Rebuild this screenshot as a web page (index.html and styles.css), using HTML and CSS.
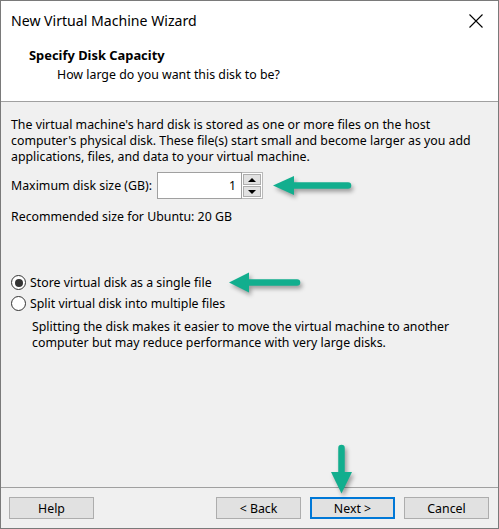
FILE: index.html
```html
<!DOCTYPE html>
<html lang="en">
<head>
    <meta charset="UTF-8">
    <title>New Virtual Machine Wizard</title>
    <link rel="stylesheet" href="styles.css">
</head>
<body>
    <div class="window">
        <div class="titlebar">
            <span class="title">New Virtual Machine Wizard</span>
            <svg class="close" width="14" height="14" viewBox="0 0 14 14">
                <path d="M0.5 0.5 L13.5 13.5 M13.5 0.5 L0.5 13.5" stroke="#000" stroke-width="1.1" fill="none"/>
            </svg>
        </div>

        <div class="header">
            <div class="step-title">Specify Disk Capacity</div>
            <div class="step-sub">How large do you want this disk to be?</div>
        </div>

        <main class="content">
            <p class="intro">The virtual machine's hard disk is stored as one or more files on the host computer's physical disk. These file(s) start small and become larger as you add applications, files, and data to your virtual machine.</p>

            <div class="size-row">
                <label for="disk-size">Maximum disk size (GB):</label>
                <div class="spin">
                    <input id="disk-size" type="text" value="1">
                    <div class="spin-buttons">
                        <span class="spin-btn"><span class="tri up"></span></span>
                        <span class="spin-btn"><span class="tri down"></span></span>
                    </div>
                </div>
            </div>

            <p class="recommended">Recommended size for Ubuntu: 20 GB</p>

            <div class="options">
                <div class="radio-row">
                    <span class="radio checked"></span>
                    <span>Store virtual disk as a single file</span>
                </div>
                <div class="radio-row">
                    <span class="radio"></span>
                    <span>Split virtual disk into multiple files</span>
                </div>
                <p class="note">Splitting the disk makes it easier to move the virtual machine to another computer but may reduce performance with very large disks.</p>
            </div>
        </main>

        <footer class="buttons">
            <button class="btn">Help</button>
            <span class="spacer"></span>
            <button class="btn">&lt; Back</button>
            <button class="btn focused">Next &gt;</button>
            <button class="btn">Cancel</button>
        </footer>

        <!-- green pointers -->
        <svg class="pointer pointer-size" width="90" height="32" viewBox="0 0 90 32">
            <path d="M4 14.5 L25 5 L25 24 Z" class="arrow-fill"/>
            <line x1="24" y1="14.5" x2="79" y2="14.5" class="arrow-line"/>
        </svg>
        <svg class="pointer pointer-single" width="90" height="32" viewBox="0 0 90 32">
            <path d="M4 11.5 L24 1.5 L24 21.5 Z" class="arrow-fill"/>
            <line x1="23" y1="11.5" x2="72" y2="11.5" class="arrow-line"/>
        </svg>
        <svg class="pointer pointer-next" width="32" height="56" viewBox="0 0 32 56">
            <path d="M12.5 49.5 L2 28 L23 28 Z" class="arrow-fill"/>
            <line x1="12.5" y1="4" x2="12.5" y2="29" class="arrow-line"/>
        </svg>
    </div>
</body>
</html>
```

FILE: styles.css
```css
/* Fenêtre de l'assistant */
body {
    margin: 0;
    font-family: "Noto Sans", "Open Sans", sans-serif;
    font-size: 12.35px;
    color: #000;
    background: #fff;
}

.window {
    position: relative;
    width: 499px;
    height: 529px;
    box-sizing: border-box;
    border: 1px solid #7a7a7a;
    display: flex;
    flex-direction: column;
    background: #f0f0f0;
    overflow: hidden;
}

/* Barre de titre */
.titlebar {
    height: 39px;
    background: #fff;
    display: flex;
    align-items: center;
    padding: 0 15px 0 10px;
    flex-shrink: 0;
}

.title {
    font-size: 14.1px;
    flex: 1;
}

.close {
    display: block;
}

/* En-tête de l'étape */
.header {
    height: 62px;
    box-sizing: border-box;
    background: #fff;
    border-bottom: 1px solid #a0a0a0;
    padding: 7px 0 0 28px;
    flex-shrink: 0;
    line-height: 16px;
}

.step-title {
    font-weight: bold;
    font-size: 12.9px;
}

.step-sub {
    margin-top: 4px;
    padding-left: 28px;
}

/* Contenu principal */
.content {
    flex: 1;
    padding: 15px 12px 0 10px;
    line-height: 16px;
}

.content p {
    margin: 0;
}

.size-row {
    display: flex;
    align-items: center;
    margin-top: 7px;
}

.size-row label {
    margin-right: 5px;
}

.spin {
    display: flex;
    height: 27px;
}

.spin input {
    width: 85px;
    height: 27px;
    box-sizing: border-box;
    border: 1px solid #a0a0a0;
    background: #fff;
    font: inherit;
    text-align: right;
    padding: 0 5px;
    margin: 0;
}

.spin-buttons {
    width: 21px;
    border: 1px solid #b9b9b9;
    border-left: none;
    box-sizing: border-box;
    display: flex;
    flex-direction: column;
    gap: 1px;
    padding: 1px;
    background: #fff;
}

.spin-btn {
    flex: 1;
    background: #e1e1e1;
    border: 1px solid #adadad;
    display: flex;
    align-items: center;
    justify-content: center;
}

.tri {
    width: 0;
    height: 0;
    border-left: 4px solid transparent;
    border-right: 4px solid transparent;
}

.tri.up {
    border-bottom: 4px solid #000;
}

.tri.down {
    border-top: 4px solid #000;
}

.content .recommended {
    margin-top: 10px;
}

/* Options de stockage */
.options {
    margin-top: 47px;
}

.radio-row {
    display: flex;
    align-items: center;
    height: 21px;
}

.radio {
    width: 15px;
    height: 15px;
    box-sizing: border-box;
    border: 1px solid #333;
    border-radius: 50%;
    background: #fff;
    margin-right: 4px;
    display: flex;
    align-items: center;
    justify-content: center;
}

.radio.checked::after {
    content: "";
    width: 8px;
    height: 8px;
    border-radius: 50%;
    background: #333;
}

.content .note {
    margin-top: 5px;
    padding-left: 21px;
}

/* Boutons du bas */
.buttons {
    height: 41px;
    box-sizing: border-box;
    border-top: 1px solid #a0a0a0;
    padding: 9px 9px 0 8px;
    display: flex;
    align-items: flex-start;
    gap: 9px;
    flex-shrink: 0;
}

.spacer {
    flex: 1;
}

.btn {
    width: 85px;
    height: 22px;
    box-sizing: border-box;
    background: #e1e1e1;
    border: 1px solid #adadad;
    font: inherit;
    color: #000;
    padding: 0;
    margin: 0;
}

.btn.focused {
    border: 2px solid #0078d7;
}

/* Flèches vertes */
.pointer {
    position: absolute;
    filter: drop-shadow(2px 3px 2px rgba(0, 0, 0, 0.35));
}

.arrow-fill {
    fill: #12ae8e;
}

.arrow-line {
    stroke: #12ae8e;
    stroke-width: 6.5;
    stroke-linecap: round;
}

.pointer-size {
    left: 268px;
    top: 170px;
}

.pointer-single {
    left: 224px;
    top: 270px;
}

.pointer-next {
    left: 328px;
    top: 443px;
}
```
